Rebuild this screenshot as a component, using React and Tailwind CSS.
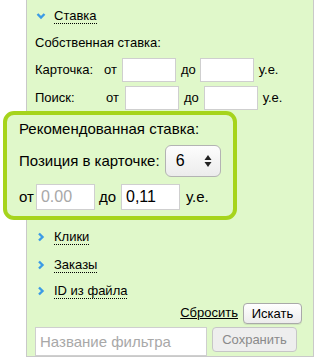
import { useState } from "react";

function Chevron({ open }) {
  return (
    <svg width="10" height="10" viewBox="0 0 10 10" className="shrink-0">
      {open ? (
        <path d="M1.5 3 L5 6.5 L8.5 3" fill="none" stroke="#3b9be6" strokeWidth="2.4" />
      ) : (
        <path d="M3 1.5 L6.5 5 L3 8.5" fill="none" stroke="#3b9be6" strokeWidth="2.4" />
      )}
    </svg>
  );
}

function Section({ title, open }) {
  return (
    <div className="flex items-center gap-[8px] pl-[1px]">
      <Chevron open={open} />
      <span className="border-b border-dotted border-black leading-[15px]">{title}</span>
    </div>
  );
}

function Field({ w = "w-[54px]", h = "h-[24px]", value, placeholder, big }) {
  return (
    <input
      defaultValue={value}
      placeholder={placeholder}
      className={`${w} ${h} border border-[#cfcfcf] bg-white px-[4px] outline-none ${big ? "text-[16px] placeholder:text-[#a8a8a8]" : "text-[13px]"}`}
    />
  );
}

export default function App() {
  const [pos, setPos] = useState("6");

  return (
    <div
      className="w-[314px] h-[358px] bg-white text-[13px] text-black overflow-hidden"
      style={{ fontFamily: '"Liberation Sans", Arial, sans-serif' }}
    >
      <div className="ml-[26px] w-[288px] h-[357px] bg-[#e0f8ca] border-l border-r border-b border-[#c9c9c9] pl-[8px] flex flex-col">

        <div className="h-[30px] flex items-center pt-[2px]">
          <Section title="Ставка" open />
        </div>

        <div className="h-[26px] flex items-center">Собственная ставка:</div>

        <div className="h-[28px] flex items-center">
          <span>Карточка:</span>
          <span className="ml-[11px]">от</span>
          <span className="ml-[5px]"><Field /></span>
          <span className="ml-[5px]">до</span>
          <span className="ml-[4px]"><Field /></span>
          <span className="ml-[5px]">у.е.</span>
        </div>

        <div className="h-[27px] flex items-center">
          <span className="w-[71px]">Поиск:</span>
          <span>от</span>
          <span className="ml-[6px]"><Field /></span>
          <span className="ml-[5px]">до</span>
          <span className="ml-[5px]"><Field /></span>
          <span className="ml-[5px]">у.е.</span>
        </div>

        <div className="-ml-[32px] w-[234px] h-[109px] border-[4px] border-[#a6d41c] rounded-[11px] bg-[#e0f8ca] pl-[12px] flex flex-col text-[15px]">
          <div className="h-[28px] flex items-center">Рекомендованная ставка:</div>
          <div className="h-[36px] flex items-center">
            <span>Позиция в карточке:</span>
            <div className="relative ml-[5px] w-[56px] h-[32px] rounded-[6px] border border-[#b3b3b3] bg-gradient-to-b from-[#fdfdfd] to-[#ececec]">
              <select
                value={pos}
                onChange={(e) => setPos(e.target.value)}
                className="appearance-none w-full h-full bg-transparent pl-[10px] text-[16px] outline-none"
              >
                {["1", "2", "3", "4", "5", "6", "7", "8", "9", "10"].map((n) => (
                  <option key={n}>{n}</option>
                ))}
              </select>
              <svg width="8" height="14" viewBox="0 0 8 14" className="absolute right-[8px] top-[8px] pointer-events-none">
                <path d="M0.5 6 L4 1 L7.5 6 Z" fill="#222" />
                <path d="M0.5 8 L4 13 L7.5 8 Z" fill="#222" />
              </svg>
            </div>
          </div>
          <div className="h-[36px] flex items-center">
            <span>от</span>
            <span className="ml-[2px]"><Field w="w-[59px]" h="h-[26px]" placeholder="0.00" big /></span>
            <span className="ml-[4px]">до</span>
            <span className="ml-[5px]"><Field w="w-[59px]" h="h-[26px]" value="0,11" big /></span>
            <span className="ml-[6px]">у.е.</span>
          </div>
        </div>

        <div className="h-[28px] flex items-center mt-[3px]">
          <Section title="Клики" />
        </div>
        <div className="h-[28px] flex items-center">
          <Section title="Заказы" />
        </div>
        <div className="h-[23px] flex items-center">
          <Section title="ID из файла" />
        </div>

        <div className="h-[22px] flex items-center justify-end pr-[11px]">
          <a href="#" className="underline text-black">Сбросить</a>
          <button className="ml-[5px] h-[21px] w-[59px] rounded-[4px] border border-[#a9a9a9] bg-gradient-to-b from-white to-[#ececec] text-[13px] shadow-[0_1px_0_rgba(0,0,0,0.08)]">
            Искать
          </button>
        </div>

        <div className="flex items-start mt-[3px]">
          <input
            placeholder="Название фильтра"
            className="w-[172px] h-[29px] border border-[#cfcfcf] bg-white px-[4px] text-[15px] placeholder:text-[#a8a8a8] outline-none"
          />
          <button
            disabled
            className="ml-[5px] h-[25px] w-[85px] rounded-[4px] border border-[#c6c6c6] bg-[#eeeeee] text-[13px] text-[#8a8a8a]"
          >
            Сохранить
          </button>
        </div>

      </div>
    </div>
  );
}
